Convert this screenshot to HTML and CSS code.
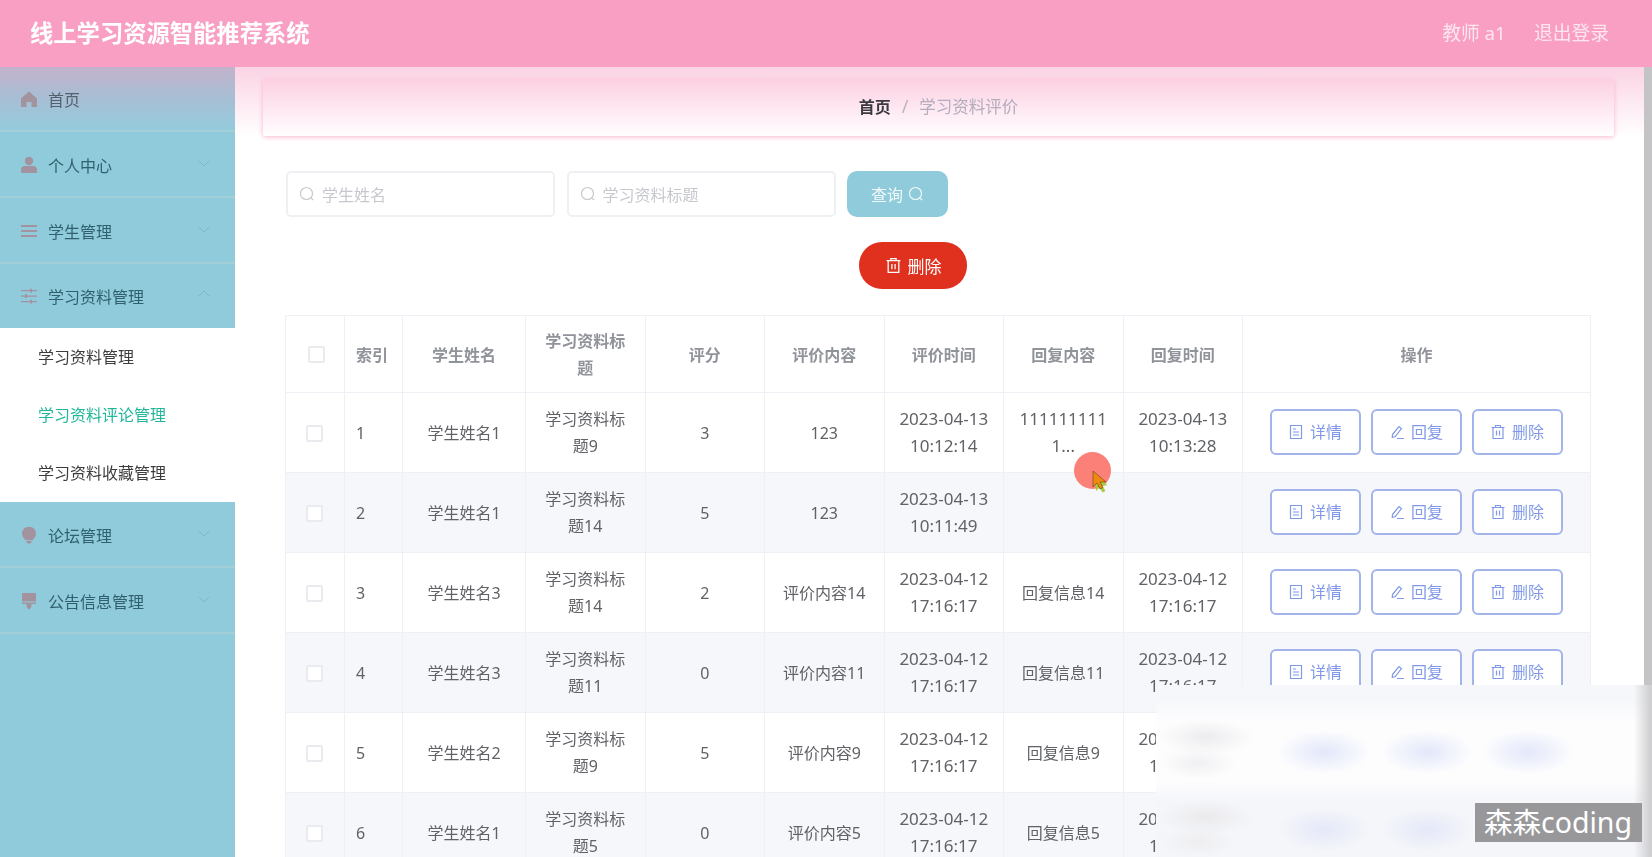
FILE: index.html
```html
<!DOCTYPE html>
<html lang="zh-CN">
<head>
<meta charset="utf-8">
<title>线上学习资源智能推荐系统</title>
<link rel="stylesheet" href="styles.css">
</head>
<body>
<svg class="defs" width="0" height="0" aria-hidden="true">
  <symbol id="i-search" viewBox="0 0 16 16"><circle cx="7.5" cy="7.5" r="6" fill="none" stroke="currentColor" stroke-width="1.2"/><path d="M12 12l2.2 2.2" fill="none" stroke="currentColor" stroke-width="1.2"/></symbol>
  <symbol id="i-trash" viewBox="0 0 16 16"><path d="M1.5 3.5h13M5.5 3.5V1.5h5v2M3 3.5v11h10v-11M6.5 6.5v5M9.5 6.5v5" fill="none" stroke="currentColor" stroke-width="1.2"/></symbol>
  <symbol id="i-doc" viewBox="0 0 16 16"><path d="M2.5 1.5h11v13h-11zM5 5h3M5 8h6M5 11h6" fill="none" stroke="currentColor" stroke-width="1.2"/></symbol>
  <symbol id="i-edit" viewBox="0 0 16 16"><path d="M3.5 10.5L10 2.5l2.5 2-6.2 8-3 1zM8 14.5h7" fill="none" stroke="currentColor" stroke-width="1.2"/></symbol>
  <symbol id="i-down" viewBox="0 0 12 12"><path d="M1 4l5 5 5-5" fill="none" stroke="currentColor" stroke-width="1"/></symbol>
</svg>
<header class="topbar">
  <div class="brand">线上学习资源智能推荐系统</div>
  <div class="account"><span>教师 a1</span><span>退出登录</span></div>
</header>
<div class="layout">
  <aside class="sidebar">
    <div class="menu-item home">
      <svg class="menu-icon" viewBox="0 0 18 18"><path d="M9 1.5L17 8.5V17H11.5V12h-5v5H1V8.5z" fill="currentColor"/></svg>
      <span>首页</span>
    </div>
    <div class="menu-item">
      <svg class="menu-icon" viewBox="0 0 18 18"><circle cx="9" cy="5" r="4.2" fill="currentColor"/><path d="M1 17v-3.5C1 11 3 10 5 10h8c2 0 4 1 4 3.5V17z" fill="currentColor"/></svg>
      <span>个人中心</span>
      <svg class="chev"><use href="#i-down"/></svg>
    </div>
    <div class="menu-item">
      <svg class="menu-icon" viewBox="0 0 18 18"><path d="M1 3h16v2H1zM1 8h16v2H1zM1 13h16v2H1z" fill="currentColor"/></svg>
      <span>学生管理</span>
      <svg class="chev"><use href="#i-down"/></svg>
    </div>
    <div class="menu-item open">
      <svg class="menu-icon" viewBox="0 0 18 18"><path d="M1 3h16v1.2H1zM1 8.5h16v1.2H1zM1 14h16v1.2H1zM10 1.8h2v3.6h-2zM5 7.3h2v3.6H5zM10 12.8h2v3.6h-2z" fill="currentColor"/></svg>
      <span>学习资料管理</span>
      <svg class="chev up"><use href="#i-down"/></svg>
    </div>
    <div class="submenu">
      <div class="sub-item">学习资料管理</div>
      <div class="sub-item active">学习资料评论管理</div>
      <div class="sub-item">学习资料收藏管理</div>
    </div>
    <div class="menu-item">
      <svg class="menu-icon" viewBox="0 0 18 18"><path d="M9 .8c3.900 0 7 2.900 7 6.600 0 2.600-1.400 4-2.600 5.600l-.6 1.200H5.200l-.6-1.200C3.400 11.400 2 10 2 7.400 2 3.700 5.100.8 9 .8zM6.500 15h5v1.300l-1.200 1.200H7.700l-1.200-1.200z" fill="currentColor"/></svg>
      <span>论坛管理</span>
      <svg class="chev"><use href="#i-down"/></svg>
    </div>
    <div class="menu-item">
      <svg class="menu-icon" viewBox="0 0 18 18"><path d="M2 1h14v8.500H2zM2 10.500h14V12h-4.500v2.500L9.800 17.200H8.200l-1.700-2.700V12H2z" fill="currentColor"/></svg>
      <span>公告信息管理</span>
      <svg class="chev"><use href="#i-down"/></svg>
    </div>
  </aside>
  <main class="content">
    <nav class="crumbs"><b>首页</b><i>/</i><span>学习资料评价</span></nav>
    <form class="filters">
      <label class="search-box"><svg class="ic"><use href="#i-search"/></svg><span>学生姓名</span></label>
      <label class="search-box"><svg class="ic"><use href="#i-search"/></svg><span>学习资料标题</span></label>
      <div class="btn-query">查询<svg class="ic"><use href="#i-search"/></svg></div>
    </form>
    <div class="bulk"><div class="btn-danger"><svg class="ic"><use href="#i-trash"/></svg>删除</div></div>
    <table class="grid">
      <colgroup>
        <col class="c-check"><col class="c-index"><col class="c-name"><col class="c-title"><col class="c-data"><col class="c-data"><col class="c-data"><col class="c-data"><col class="c-data"><col class="c-ops">
      </colgroup>
      <thead>
        <tr>
          <th><span class="check head"></span></th><th class="left">索引</th><th>学生姓名</th><th>学习资料标<br>题</th><th>评分</th><th>评价内容</th><th>评价时间</th><th>回复内容</th><th>回复时间</th><th>操作</th>
        </tr>
      </thead>
      <tbody>
        <tr>
          <td><span class="check"></span></td><td class="left">1</td><td>学生姓名1</td><td>学习资料标<br>题9</td><td>3</td><td>123</td><td class="date">2023-04-13<br>10:12:14</td><td class="date">111111111<br>1...</td><td class="date">2023-04-13<br>10:13:28</td>
          <td><div class="ops"><div class="op"><svg class="ic"><use href="#i-doc"/></svg>详情</div><div class="op"><svg class="ic"><use href="#i-edit"/></svg>回复</div><div class="op"><svg class="ic"><use href="#i-trash"/></svg>删除</div></div></td>
        </tr>
        <tr>
          <td><span class="check"></span></td><td class="left">2</td><td>学生姓名1</td><td>学习资料标<br>题14</td><td>5</td><td>123</td><td class="date">2023-04-13<br>10:11:49</td><td></td><td></td>
          <td><div class="ops"><div class="op"><svg class="ic"><use href="#i-doc"/></svg>详情</div><div class="op"><svg class="ic"><use href="#i-edit"/></svg>回复</div><div class="op"><svg class="ic"><use href="#i-trash"/></svg>删除</div></div></td>
        </tr>
        <tr>
          <td><span class="check"></span></td><td class="left">3</td><td>学生姓名3</td><td>学习资料标<br>题14</td><td>2</td><td>评价内容14</td><td class="date">2023-04-12<br>17:16:17</td><td>回复信息14</td><td class="date">2023-04-12<br>17:16:17</td>
          <td><div class="ops"><div class="op"><svg class="ic"><use href="#i-doc"/></svg>详情</div><div class="op"><svg class="ic"><use href="#i-edit"/></svg>回复</div><div class="op"><svg class="ic"><use href="#i-trash"/></svg>删除</div></div></td>
        </tr>
        <tr>
          <td><span class="check"></span></td><td class="left">4</td><td>学生姓名3</td><td>学习资料标<br>题11</td><td>0</td><td>评价内容11</td><td class="date">2023-04-12<br>17:16:17</td><td>回复信息11</td><td class="date">2023-04-12<br>17:16:17</td>
          <td><div class="ops"><div class="op"><svg class="ic"><use href="#i-doc"/></svg>详情</div><div class="op"><svg class="ic"><use href="#i-edit"/></svg>回复</div><div class="op"><svg class="ic"><use href="#i-trash"/></svg>删除</div></div></td>
        </tr>
        <tr>
          <td><span class="check"></span></td><td class="left">5</td><td>学生姓名2</td><td>学习资料标<br>题9</td><td>5</td><td>评价内容9</td><td class="date">2023-04-12<br>17:16:17</td><td>回复信息9</td><td class="date">2023-04-12<br>17:16:17</td>
          <td><div class="ops"></div></td>
        </tr>
        <tr>
          <td><span class="check"></span></td><td class="left">6</td><td>学生姓名1</td><td>学习资料标<br>题5</td><td>0</td><td>评价内容5</td><td class="date">2023-04-12<br>17:16:17</td><td>回复信息5</td><td class="date">2023-04-12<br>17:16:17</td>
          <td><div class="ops"></div></td>
        </tr>
      </tbody>
    </table>
  </main>
  <div class="scroll-track"></div>
</div>
<div class="cursor-mark">
  <svg class="cursor-arrow" viewBox="0 0 18 24"><path d="M3 6l1 15 3.500-3.500 3 5 3-1.500-3-5 5-1z" fill="#a9cc3e"/><path d="M1 1v16l4-4 3 6 3-1.500-3-5.500h6z" fill="#ee8a0e" stroke="#4a3510" stroke-width=".5"/></svg>
</div>
<div class="privacy-blur"></div>
<div class="watermark">森森coding</div>
</body>
</html>
```
FILE: styles.css
```css
* { box-sizing: border-box; }
html, body { margin: 0; height: 100%; }
body {
  position: relative;
  width: 1652px;
  height: 857px;
  overflow: hidden;
  font-family: "Noto Sans", "Noto Sans CJK SC", sans-serif;
  font-size: 16px;
  color: #606266;
  background: #fff;
}
.defs { position: absolute; }
.ic { width: 16px; height: 16px; flex: none; }

.topbar {
  height: 67px;
  padding: 0 43px 3px 30px;
  display: flex;
  align-items: center;
  justify-content: space-between;
  background: #f89fc3;
  color: #fff;
  filter: blur(.4px);
}
.brand { font-size: 23.300px; font-weight: 700; }
.account { display: flex; gap: 28px; font-size: 18.800px; color: #fde6f0; }

.layout { display: flex; height: 790px; filter: blur(.4px); }
.sidebar { flex: none; width: 235px; background: #90cbdb; color: #30606f; }
.menu-item {
  height: 66px;
  padding: 1px 20px 0;
  display: flex;
  align-items: center;
  gap: 10px;
  border-bottom: 2px solid #a3cfd9;
}
.menu-item.open { height: 64px; padding-top: 0; border-bottom: 0; }
.menu-item.home {
  height: 65px;
  padding-top: 0;
  color: #55606f;
  background: linear-gradient(#c3b2cc, #a9bdd3 45%, #93cbdc);
}
.menu-icon { width: 18px; height: 18px; flex: none; color: #a2939f; }
.chev { width: 12px; height: 12px; margin-left: auto; margin-right: 5px; margin-top: -4px; color: #7fb5c6; }
.chev.up { transform: rotate(180deg); }
.submenu { background: #fff; }
.sub-item { height: 58px; padding-left: 38px; line-height: 58px; color: #3c3c3c; }
.sub-item.active { color: #20b79a; }

.content {
  flex: 1;
  min-width: 0;
  padding: 12px 0 0 28px;
  background: linear-gradient(#fbd3e4, #ffffff 70px);
}
.crumbs {
  width: 1351px;
  height: 57px;
  padding-bottom: 3px;
  display: flex;
  align-items: center;
  justify-content: center;
  gap: 11px;
  border-radius: 3px;
  background: linear-gradient(#fcd0e2, #fff7fb 85%, #fff);
  box-shadow: 0 1px 5px #fab3cf;
}
.crumbs b { color: #3a3a40; font-weight: 700; }
.crumbs i { color: #b9b6c2; font-style: normal; font-size: 18px; }
.crumbs span { color: #b4adbd; font-size: 16.500px; }

.filters { display: flex; gap: 11.500px; margin: 35px 0 0 23px; }
.search-box {
  width: 269px;
  height: 46px;
  padding: 0 0 1px 11px;
  display: flex;
  align-items: center;
  gap: 7px;
  border: 2px solid #eff0f3;
  border-radius: 5px;
  color: #c6c8ce;
  background: #fff;
}
.btn-query {
  width: 101px;
  height: 46px;
  display: flex;
  align-items: center;
  justify-content: center;
  gap: 5px;
  border-radius: 10px;
  background: #90cbdb;
  color: #f1f9fb;
}
.bulk { margin: 25px 0 0 596px; }
.btn-danger {
  width: 108px;
  height: 47px;
  display: flex;
  align-items: center;
  justify-content: center;
  gap: 6px;
  font-size: 17px;
  border-radius: 23px;
  background: #e0301e;
  color: #fff;
}
.btn-danger .ic { width: 17px; height: 17px; }

.grid {
  margin: 26px 0 0 22px;
  width: 1305px;
  table-layout: fixed;
  border-collapse: collapse;
  background: #fff;
}
.c-check { width: 59px; }
.c-index { width: 58px; }
.c-name { width: 123px; }
.c-title { width: 119.500px; }
.c-data { width: 119.500px; }
.c-ops { width: 348px; }
.grid th, .grid td {
  padding: 1px 10px 0;
  text-align: center;
  line-height: 27px;
  border: 1px solid #eef0f5;
}
.grid th { height: 77px; padding-top: 2px; color: #909399; font-weight: 700; }
.grid td { height: 80px; }
.grid .left { text-align: left; padding-left: 11px; }
.grid tbody tr:nth-child(even) td { background: #f5f7fa; }
.grid .date { font-size: 17px; padding: 0 10px 1px; }
.check {
  display: inline-block;
  width: 17px;
  height: 17px;
  margin: -1px 1px 0 0;
  vertical-align: middle;
  border: 2px solid #e9ebef;
  border-radius: 2px;
  background: #fff;
}
.check.head { margin: -3px 0 0 2px; }
.ops { display: flex; justify-content: center; gap: 10px; padding-right: 1px; margin-top: -2px; }
.op {
  width: 91px;
  height: 46px;
  display: flex;
  align-items: center;
  justify-content: center;
  gap: 6px;
  border: 2px solid #a3b4ea;
  border-radius: 6px;
  background: #fff;
  color: #8199e8;
}

.scroll-track { flex: none; width: 8px; background: #c4c4c6; }
.cursor-mark {
  position: absolute;
  left: 1074px;
  top: 452px;
  width: 37px;
  height: 37px;
  border-radius: 50%;
  background: #fb8178;
}
.cursor-arrow { position: absolute; left: 18px; top: 18px; width: 18px; height: 24px; }

/* Blurred patch painted over the lower right of the table in the recording. */
.privacy-blur {
  position: absolute;
  left: 1156px;
  top: 685px;
  right: 0;
  bottom: 0;
  background:
    radial-gradient(ellipse 48px 18px at 50px 52px, #ececee, transparent),
    radial-gradient(ellipse 38px 16px at 42px 78px, #f0f0f2, transparent),
    radial-gradient(ellipse 48px 18px at 50px 132px, #eaeaec, transparent),
    radial-gradient(ellipse 38px 16px at 42px 157px, #eeeef0, transparent),
    radial-gradient(ellipse 46px 22px at 168px 67px, #e2e7fa, transparent),
    radial-gradient(ellipse 46px 22px at 271px 67px, #e2e7fa, transparent),
    radial-gradient(ellipse 46px 22px at 372px 67px, #e2e7fa, transparent),
    radial-gradient(ellipse 46px 22px at 168px 145px, #e4e8f8, transparent),
    radial-gradient(ellipse 46px 22px at 271px 145px, #e4e8f8, transparent),
    linear-gradient(to right, transparent 478px, #d0d0d2 494px),
    linear-gradient(#f6f7fa 14px, #fdfdfe 36px, #fdfdfe 96px, #f5f6fa 116px);
}
.watermark {
  position: absolute;
  left: 1475px;
  top: 803px;
  width: 167px;
  height: 39px;
  padding-left: 9px;
  line-height: 39px;
  white-space: nowrap;
  font-size: 28.500px;
  color: #fff;
  background: #98989b;
}
```
